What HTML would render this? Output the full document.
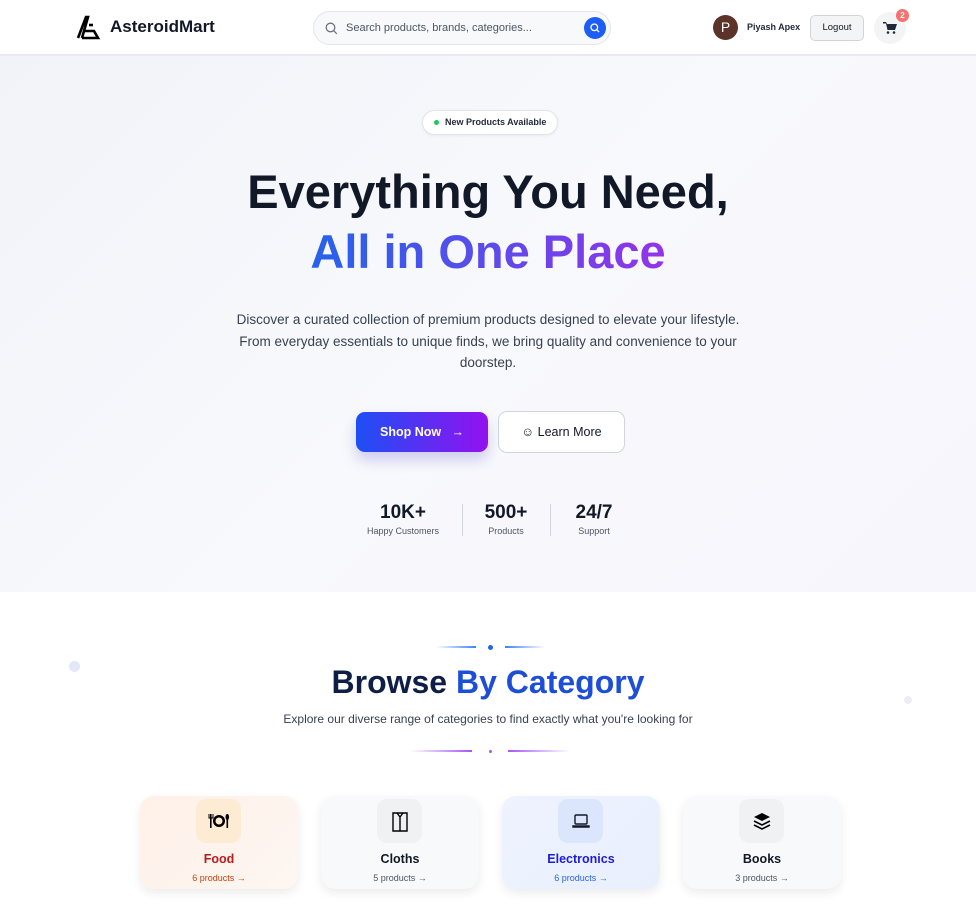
<!DOCTYPE html>
<html><head><meta charset="utf-8"><style>
*{margin:0;padding:0;box-sizing:border-box}
body{width:976px;height:909px;overflow:hidden;font-family:"Liberation Sans",sans-serif;background:#fff;color:#111827;position:relative}
.hdr{position:absolute;top:0;left:0;width:976px;height:56px;background:#fff;border-bottom:2px solid #e8eaf0;z-index:2}
.logo{position:absolute;left:76px;top:14px;display:flex;align-items:center;gap:8px;font-size:17px;font-weight:bold;color:#111827}
.search{position:absolute;left:313px;top:11px;width:298px;height:34px;border:1px solid #e2e5ec;border-radius:17px;background:#f8f9fb}
.search span{position:absolute;left:32px;top:10px;font-size:11px;color:#4b5563}
.sbtn{position:absolute;right:4px;top:5px;width:22px;height:22px;border-radius:50%;background:#1d5ff5}
.hero{position:absolute;top:56px;left:0;width:976px;height:536px;background:linear-gradient(135deg,#f1f3f9 0%,#f8f9fc 50%,#f8f6fd 100%)}
.badge{position:absolute;left:422px;top:110px;width:136px;height:25px;border:1px solid #e2e5ec;border-radius:13px;background:#fff;font-size:9px;font-weight:bold;color:#1f2937;line-height:23px;padding-left:22px;box-shadow:0 1px 3px rgba(0,0,0,.06)}
.badge:before{content:"";position:absolute;left:11px;top:9px;width:5px;height:5px;border-radius:50%;background:#22c55e}
.c{position:absolute;left:0;width:976px;text-align:center}
h1{font-size:47px;font-weight:bold;color:#111827}
.grad{background:linear-gradient(90deg,#2563eb,#9333ea);-webkit-background-clip:text;color:transparent}
.p{font-size:13.5px;line-height:21.5px;color:#374151}
.shop{position:absolute;left:356px;top:412px;width:132px;height:40px;border-radius:9px;background:linear-gradient(90deg,#1d4ff5,#9311f0);color:#fff;font-size:12.5px;font-weight:bold;line-height:40px;text-align:center;box-shadow:0 8px 14px rgba(60,40,200,.22)}
.learn{position:absolute;left:498px;top:411px;width:127px;height:42px;border-radius:9px;border:1px solid #d1d5db;background:#fff;font-size:12.5px;line-height:40px;text-align:center;color:#111827}
.stat{position:absolute;top:502px;text-align:center}
.stat b{display:block;font-size:19px;color:#111827}
.stat small{display:block;font-size:9px;color:#4b5563;margin-top:2px}
.dv{position:absolute;top:504px;width:1px;height:32px;background:#d1d5db}
.card{position:absolute;top:796px;width:158px;height:93px;border-radius:14px;background:#f8f9fb;box-shadow:0 4px 10px rgba(0,0,0,.08);text-align:center;overflow:hidden}
.ib{position:absolute;left:56px;top:3px;width:45px;height:44px;border-radius:10px;background:#f0f1f3;display:flex;align-items:center;justify-content:center}
.card .n{position:absolute;top:56px;width:100%;font-size:12.5px;font-weight:bold}
.card .s{position:absolute;top:77px;width:100%;font-size:9px}
.line{position:absolute;height:2px}
</style></head><body>
<div class="hdr">
 <div class="logo"><svg width="26" height="26" viewBox="0 0 26 26" fill="none" stroke="#000" stroke-width="2.6"><path d="M2 24 L10 3 L12 3 L6 24"/><path d="M9 17 H18 L22 24 H6"/><path d="M13 11 L17 11"/></svg>AsteroidMart</div>
 <div class="search"><svg style="position:absolute;left:11px;top:10px" width="13" height="13" viewBox="0 0 13 13" fill="none" stroke="#6b7280" stroke-width="1.3"><circle cx="5.5" cy="5.5" r="4.3"/><path d="M8.8 8.8l3 3"/></svg><span>Search products, brands, categories...</span><div class="sbtn"><svg style="position:absolute;left:6px;top:6px" width="10" height="10" viewBox="0 0 10 10" fill="none" stroke="#fff" stroke-width="1.3"><circle cx="4.3" cy="4.3" r="3.3"/><path d="M6.8 6.8l2.3 2.3"/></svg></div></div>
 <div style="position:absolute;left:713px;top:15px;width:25px;height:25px;border-radius:50%;background:#5b3328;color:#fff;font-size:14px;text-align:center;line-height:25px">P</div>
 <div style="position:absolute;left:747px;top:22px;font-size:9px;font-weight:bold;color:#1f2937">Piyash Apex</div>
 <div style="position:absolute;left:810px;top:15px;width:54px;height:26px;border:1px solid #d1d5db;border-radius:5px;background:#f3f4f6;font-size:9.5px;text-align:center;line-height:24px;color:#111827">Logout</div>
 <div style="position:absolute;left:874px;top:12px;width:32px;height:32px;border-radius:50%;background:#f3f4f6"><svg style="position:absolute;left:9px;top:10px" width="14" height="12" viewBox="0 0 14 12" fill="#1f2937"><path d="M0 0h3l1 2h10l-2 6H4.5L3 1.5H0z"/><circle cx="5" cy="10.5" r="1.3"/><circle cx="11" cy="10.5" r="1.3"/></svg></div>
 <div style="position:absolute;left:896px;top:9px;width:13px;height:13px;border-radius:50%;background:#f87171;color:#fff;font-size:8px;font-weight:bold;text-align:center;line-height:13px">2</div>
</div>
<div class="hero"></div>
<div class="badge">New Products Available</div>
<div class="c" style="top:164px"><h1>Everything You Need,</h1></div>
<div class="c" style="top:224px"><h1><span class="grad">All in One Place</span></h1></div>
<div class="c p" style="top:309px">Discover a curated collection of premium products designed to elevate your lifestyle.<br>From everyday essentials to unique finds, we bring quality and convenience to your<br>doorstep.</div>
<div class="shop">Shop Now &nbsp;&nbsp;→</div>
<div class="learn">☺ Learn More</div>
<div class="stat" style="left:360px;width:86px"><b>10K+</b><small>Happy Customers</small></div>
<div class="dv" style="left:462px"></div>
<div class="stat" style="left:476px;width:60px"><b>500+</b><small>Products</small></div>
<div class="dv" style="left:550px"></div>
<div class="stat" style="left:564px;width:60px"><b>24/7</b><small>Support</small></div>

<div class="line" style="left:436px;top:646px;width:40px;background:linear-gradient(90deg,transparent,#3b82f6)"></div>
<div style="position:absolute;left:488px;top:645px;width:5px;height:5px;border-radius:50%;background:#2563eb"></div>
<div class="line" style="left:505px;top:646px;width:40px;background:linear-gradient(90deg,#3b82f6,transparent)"></div>
<div style="position:absolute;left:69px;top:661px;width:11px;height:11px;border-radius:50%;background:#e3e8f8"></div>
<div style="position:absolute;left:904px;top:696px;width:8px;height:8px;border-radius:50%;background:#eceef5"></div>
<div class="c" style="top:664px;font-size:32px;font-weight:bold;color:#0f1e46">Browse <span style="color:#1d4ed8">By Category</span></div>
<div class="c" style="top:712px;font-size:12px;color:#374151">Explore our diverse range of categories to find exactly what you're looking for</div>
<div class="line" style="left:410px;top:750px;width:62px;background:linear-gradient(90deg,transparent,#a855f7)"></div>
<div style="position:absolute;left:489px;top:750px;width:3px;height:3px;border-radius:50%;background:#a855f7"></div>
<div class="line" style="left:508px;top:750px;width:62px;background:linear-gradient(90deg,#a855f7,transparent)"></div>

<div class="card" style="left:140px;background:linear-gradient(135deg,#fff1e8,#fdf6f2)"><div class="ib" style="background:#fdebd3"><svg width="22" height="16" viewBox="0 0 22 16" fill="#000"><circle cx="11" cy="8" r="6"/><circle cx="11" cy="8" r="3.5" fill="#fdebd3"/><rect x="2" y="1" width="1.6" height="14"/><rect x="18.5" y="1" width="1.6" height="14"/><ellipse cx="19.3" cy="4" rx="1.8" ry="3"/><path d="M1 1v4h4V1" fill="none" stroke="#000" stroke-width="1"/></svg></div><div class="n" style="color:#b91c1c">Food</div><div class="s" style="color:#c2410c">6 products →</div></div>
<div class="card" style="left:321px"><div class="ib"><svg width="20" height="22" viewBox="0 0 20 22" fill="none" stroke="#000" stroke-width="1.4"><path d="M3 3h14v18H3zM7 3l3 4 3-4M10 7v14"/></svg></div><div class="n">Cloths</div><div class="s" style="color:#4b5563">5 products →</div></div>
<div class="card" style="left:502px;background:linear-gradient(135deg,#eef3fe,#e9effd)"><div class="ib" style="background:#dbe6fc"><svg width="20" height="16" viewBox="0 0 20 16" fill="none" stroke="#111827" stroke-width="1.4"><rect x="4" y="2" width="12" height="9" rx="1"/><path d="M2 13h16v1H2z"/></svg></div><div class="n" style="color:#1d1dd8">Electronics</div><div class="s" style="color:#2563eb">6 products →</div></div>
<div class="card" style="left:683px"><div class="ib"><svg width="18" height="18" viewBox="0 0 18 18"><path d="M9 1l8 4-8 4-8-4z" fill="#000"/><path d="M1 9l8 4 8-4M1 13l8 4 8-4" fill="none" stroke="#000" stroke-width="1.6"/></svg></div><div class="n">Books</div><div class="s" style="color:#4b5563">3 products →</div></div>
</body></html>
